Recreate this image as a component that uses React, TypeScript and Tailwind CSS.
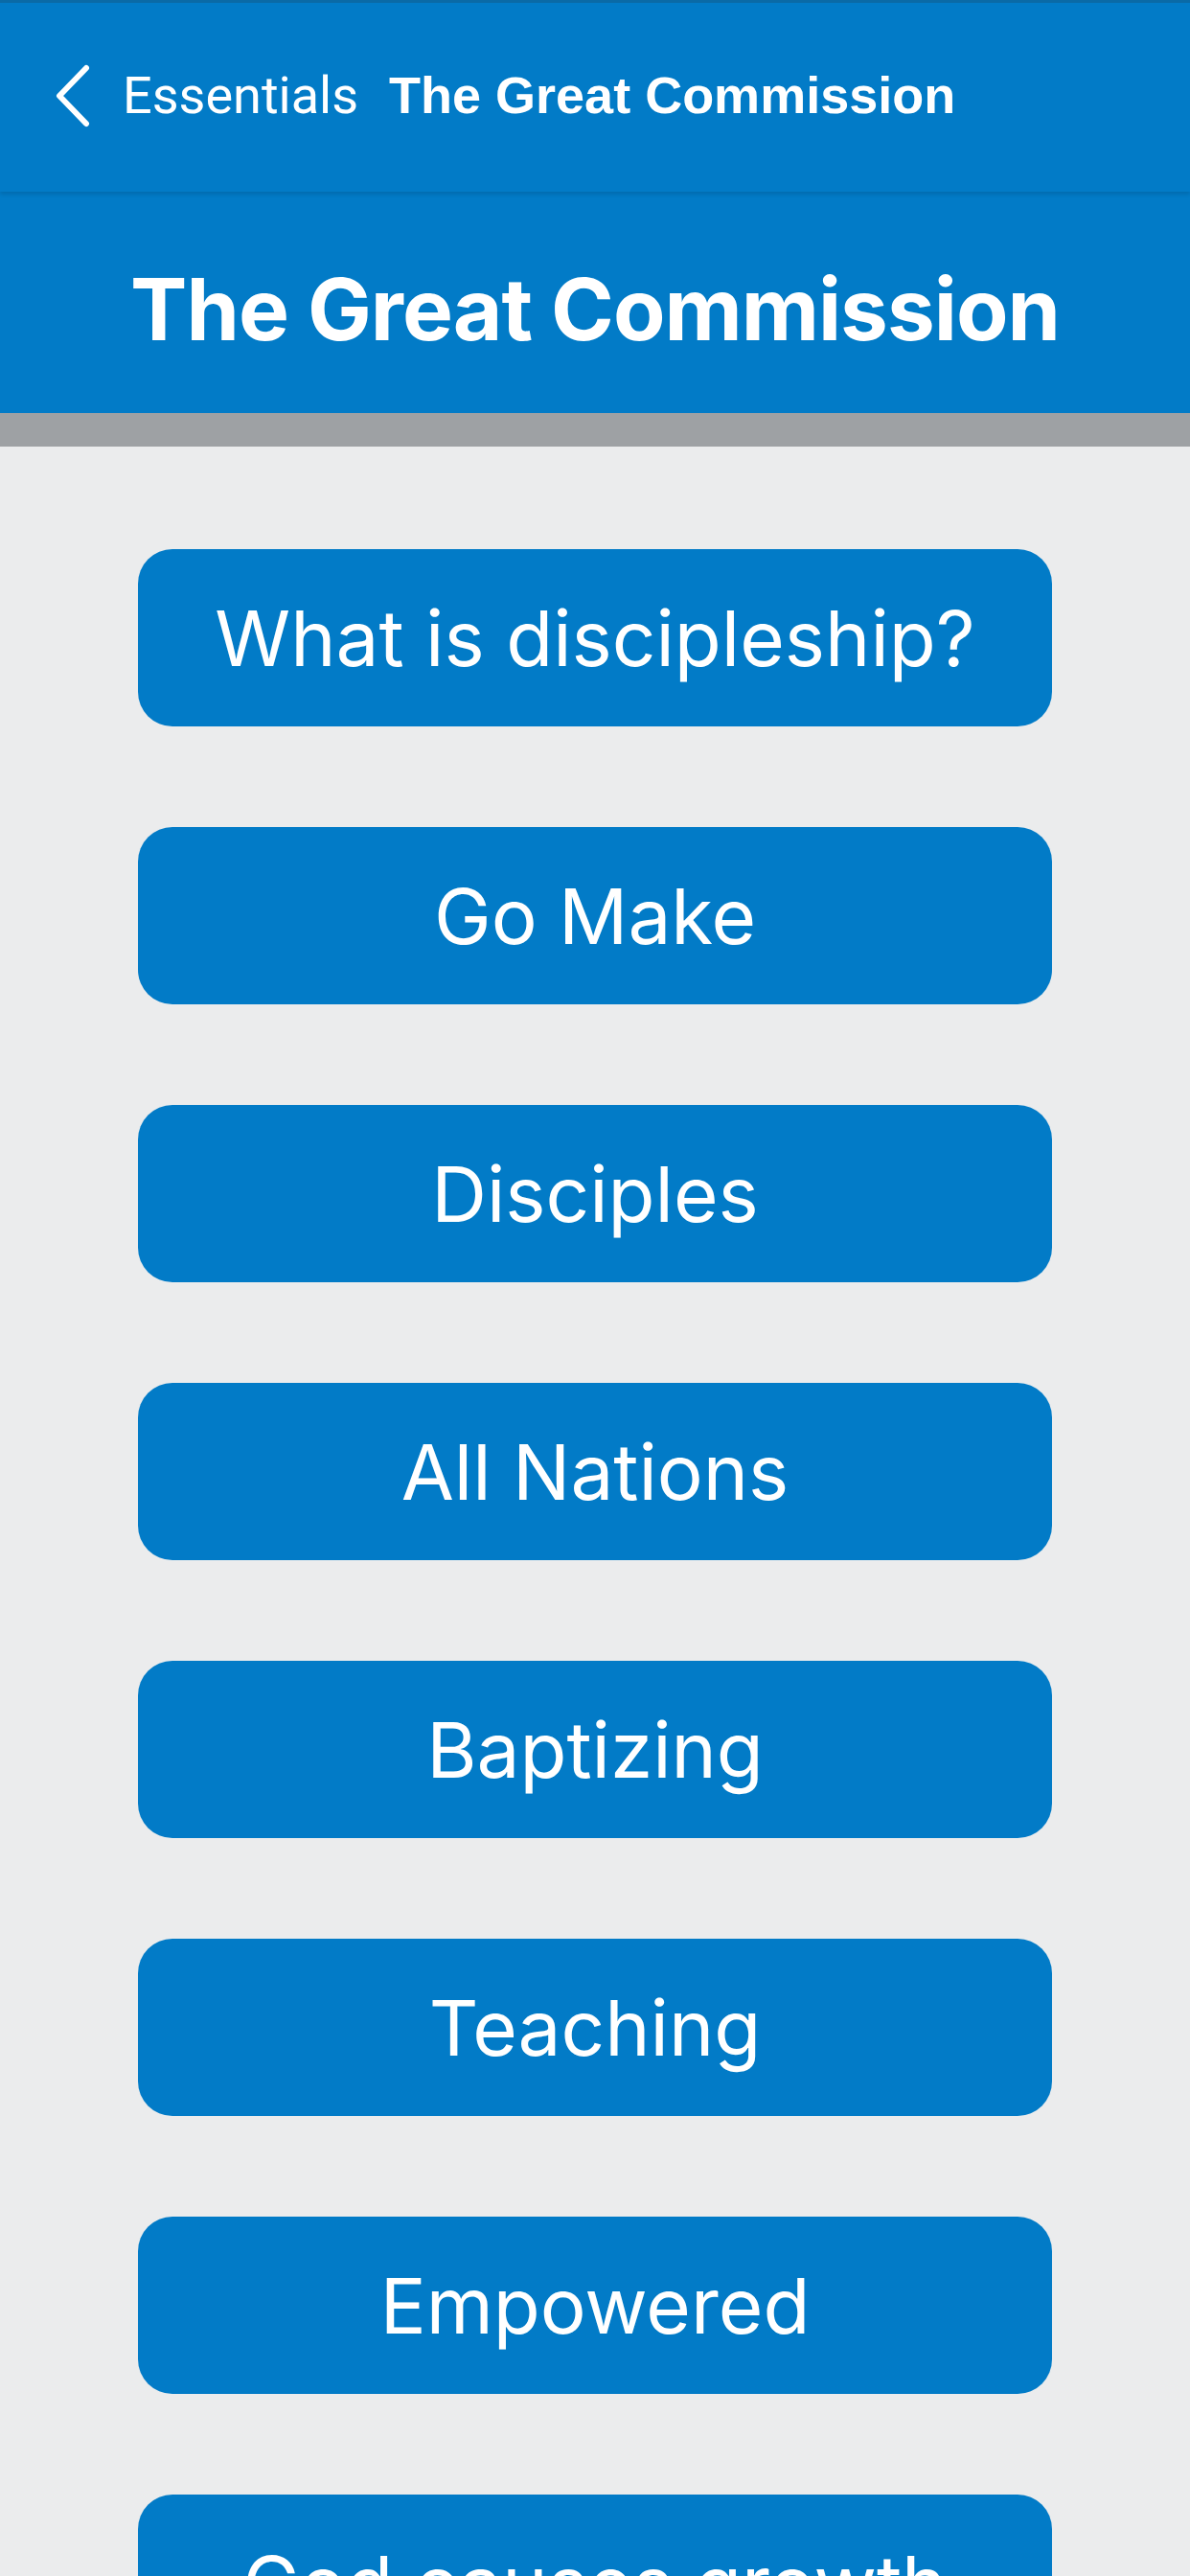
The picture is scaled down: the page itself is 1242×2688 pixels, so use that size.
const items = [
  "What is discipleship?",
  "Go Make",
  "Disciples",
  "All Nations",
  "Baptizing",
  "Teaching",
  "Empowered",
  "God causes growth",
]

export default function App() {
  return (
    <div className="w-[1242px] h-[2688px] overflow-hidden bg-[#ebeced] font-['Inter',sans-serif]">
      <div className="h-[200px] bg-[#027bc7] border-t-[3px] border-[#0a6aa6] shadow-[0_3px_4px_rgba(0,0,0,0.12)] relative z-10 flex items-center pl-[56px] pb-[4px]">
        <svg width="40" height="66" viewBox="0 0 40 66" className="shrink-0">
          <path d="M34 4 L6 33 L34 62" fill="none" stroke="white" strokeWidth="6" strokeLinecap="round" strokeLinejoin="round" />
        </svg>
        <span className="ml-[32px] text-[54px] text-white font-['Roboto',sans-serif]">Essentials</span>
        <span className="ml-[32px] text-[54px] text-white font-['Liberation_Sans',sans-serif] font-bold">The Great Commission</span>
      </div>
      <div className="h-[231px] bg-[#027bc7] flex items-center justify-center pt-[14px]">
        <h1 className="text-[89px] font-bold text-white tracking-[-1px] leading-none">The Great Commission</h1>
      </div>
      <div className="h-[35px] bg-[#9ea1a4]" />
      <div className="flex flex-col items-center gap-[105px] pt-[107px]">
        {items.map((item) => (
          <div
            key={item}
            className="w-[954px] h-[185px] shrink-0 rounded-[36px] bg-[#027bc7] flex items-center justify-center text-white text-[80px] leading-none"
          >
            {item}
          </div>
        ))}
      </div>
    </div>
  )
}
